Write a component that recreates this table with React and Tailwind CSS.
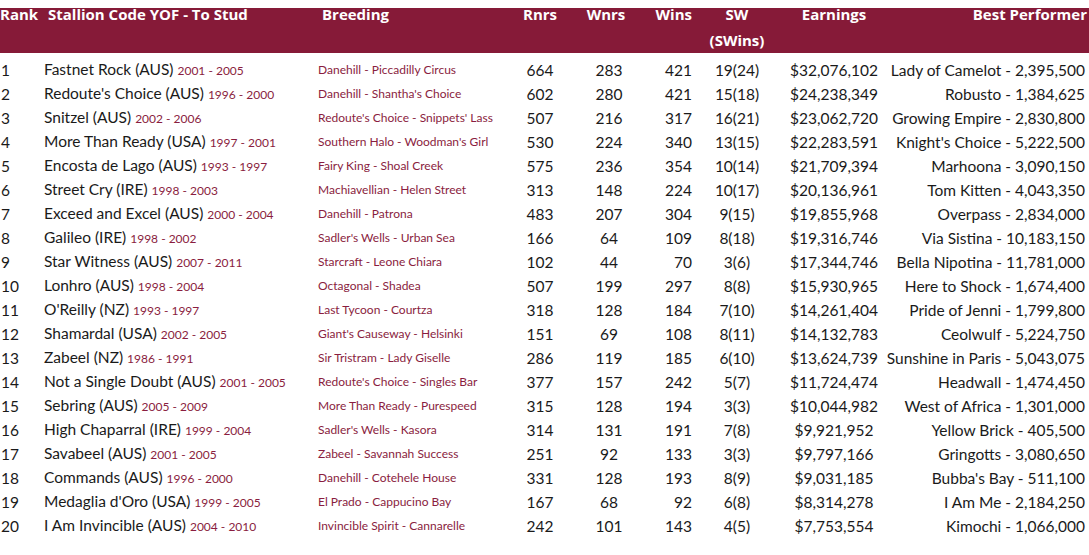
const rows = [
  ['1', 'Fastnet Rock (AUS)', '2001 - 2005', 'Danehill - Piccadilly Circus', '664', '283', '421', '19(24)', '$32,076,102', 'Lady of Camelot - 2,395,500'],
  ['2', "Redoute's Choice (AUS)", '1996 - 2000', "Danehill - Shantha's Choice", '602', '280', '421', '15(18)', '$24,238,349', 'Robusto - 1,384,625'],
  ['3', 'Snitzel (AUS)', '2002 - 2006', "Redoute's Choice - Snippets' Lass", '507', '216', '317', '16(21)', '$23,062,720', 'Growing Empire - 2,830,800'],
  ['4', 'More Than Ready (USA)', '1997 - 2001', "Southern Halo - Woodman's Girl", '530', '224', '340', '13(15)', '$22,283,591', "Knight's Choice - 5,222,500"],
  ['5', 'Encosta de Lago (AUS)', '1993 - 1997', 'Fairy King - Shoal Creek', '575', '236', '354', '10(14)', '$21,709,394', 'Marhoona - 3,090,150'],
  ['6', 'Street Cry (IRE)', '1998 - 2003', 'Machiavellian - Helen Street', '313', '148', '224', '10(17)', '$20,136,961', 'Tom Kitten - 4,043,350'],
  ['7', 'Exceed and Excel (AUS)', '2000 - 2004', 'Danehill - Patrona', '483', '207', '304', '9(15)', '$19,855,968', 'Overpass - 2,834,000'],
  ['8', 'Galileo (IRE)', '1998 - 2002', "Sadler's Wells - Urban Sea", '166', '64', '109', '8(18)', '$19,316,746', 'Via Sistina - 10,183,150'],
  ['9', 'Star Witness (AUS)', '2007 - 2011', 'Starcraft - Leone Chiara', '102', '44', '70', '3(6)', '$17,344,746', 'Bella Nipotina - 11,781,000'],
  ['10', 'Lonhro (AUS)', '1998 - 2004', 'Octagonal - Shadea', '507', '199', '297', '8(8)', '$15,930,965', 'Here to Shock - 1,674,400'],
  ['11', "O'Reilly (NZ)", '1993 - 1997', 'Last Tycoon - Courtza', '318', '128', '184', '7(10)', '$14,261,404', 'Pride of Jenni - 1,799,800'],
  ['12', 'Shamardal (USA)', '2002 - 2005', "Giant's Causeway - Helsinki", '151', '69', '108', '8(11)', '$14,132,783', 'Ceolwulf - 5,224,750'],
  ['13', 'Zabeel (NZ)', '1986 - 1991', 'Sir Tristram - Lady Giselle', '286', '119', '185', '6(10)', '$13,624,739', 'Sunshine in Paris - 5,043,075'],
  ['14', 'Not a Single Doubt (AUS)', '2001 - 2005', "Redoute's Choice - Singles Bar", '377', '157', '242', '5(7)', '$11,724,474', 'Headwall - 1,474,450'],
  ['15', 'Sebring (AUS)', '2005 - 2009', 'More Than Ready - Purespeed', '315', '128', '194', '3(3)', '$10,044,982', 'West of Africa - 1,301,000'],
  ['16', 'High Chaparral (IRE)', '1999 - 2004', "Sadler's Wells - Kasora", '314', '131', '191', '7(8)', '$9,921,952', 'Yellow Brick - 405,500'],
  ['17', 'Savabeel (AUS)', '2001 - 2005', 'Zabeel - Savannah Success', '251', '92', '133', '3(3)', '$9,797,166', 'Gringotts - 3,080,650'],
  ['18', 'Commands (AUS)', '1996 - 2000', 'Danehill - Cotehele House', '331', '128', '193', '8(9)', '$9,031,185', "Bubba's Bay - 511,100"],
  ['19', "Medaglia d'Oro (USA)", '1999 - 2005', 'El Prado - Cappucino Bay', '167', '68', '92', '6(8)', '$8,314,278', 'I Am Me - 2,184,250'],
  ['20', 'I Am Invincible (AUS)', '2004 - 2010', 'Invincible Spirit - Cannarelle', '242', '101', '143', '4(5)', '$7,753,554', 'Kimochi - 1,066,000'],
];

const cols = 'grid grid-cols-[44px_274px_187px_70px_68px_49px_90px_104px_199px] pr-[4px]';

export default function App() {
  return (
    <div className="w-[1089px] h-[555px] bg-white overflow-hidden pt-[8px] font-['Lato','Open_Sans',sans-serif] text-[#1a1a1a]">
      <div className="flex flex-col h-[45px] bg-[#861a38] text-white font-bold text-[15px] leading-[26px] font-['Open_Sans',sans-serif]">
        <div className={`${cols} -mt-[7px] whitespace-nowrap`}>
          <div className="pl-0">Rank</div>
          <div className="pl-[4px]">Stallion Code YOF - To Stud</div>
          <div className="pl-[4px]">Breeding</div>
          <div className="text-center">Rnrs</div>
          <div className="text-center pr-[6px]">Wnrs</div>
          <div className="text-right">Wins</div>
          <div className="text-center">
            <div>SW</div>
            <div>(SWins)</div>
          </div>
          <div className="text-center">Earnings</div>
          <div className="text-right -mr-[2px]">Best Performer</div>
        </div>
      </div>
      <div className="mt-[4px]">
        {rows.map((r) => (
          <div key={r[0]} className={`${cols} h-[24px] items-center text-[15.5px] leading-[24px] whitespace-nowrap`}>
            <div className="pl-[1px]">{r[0]}</div>
            <div>
              {r[1]} <span className="text-[12px] text-[#8a1d40]">{r[2]}</span>
            </div>
            <div className="text-[12px] text-[#8a1d40]">{r[3]}</div>
            <div className="text-center">{r[4]}</div>
            <div className="text-center">{r[5]}</div>
            <div className="text-right">{r[6]}</div>
            <div className="text-center">{r[7]}</div>
            <div className="text-center">{r[8]}</div>
            <div className="text-right">{r[9]}</div>
          </div>
        ))}
      </div>
    </div>
  );
}
